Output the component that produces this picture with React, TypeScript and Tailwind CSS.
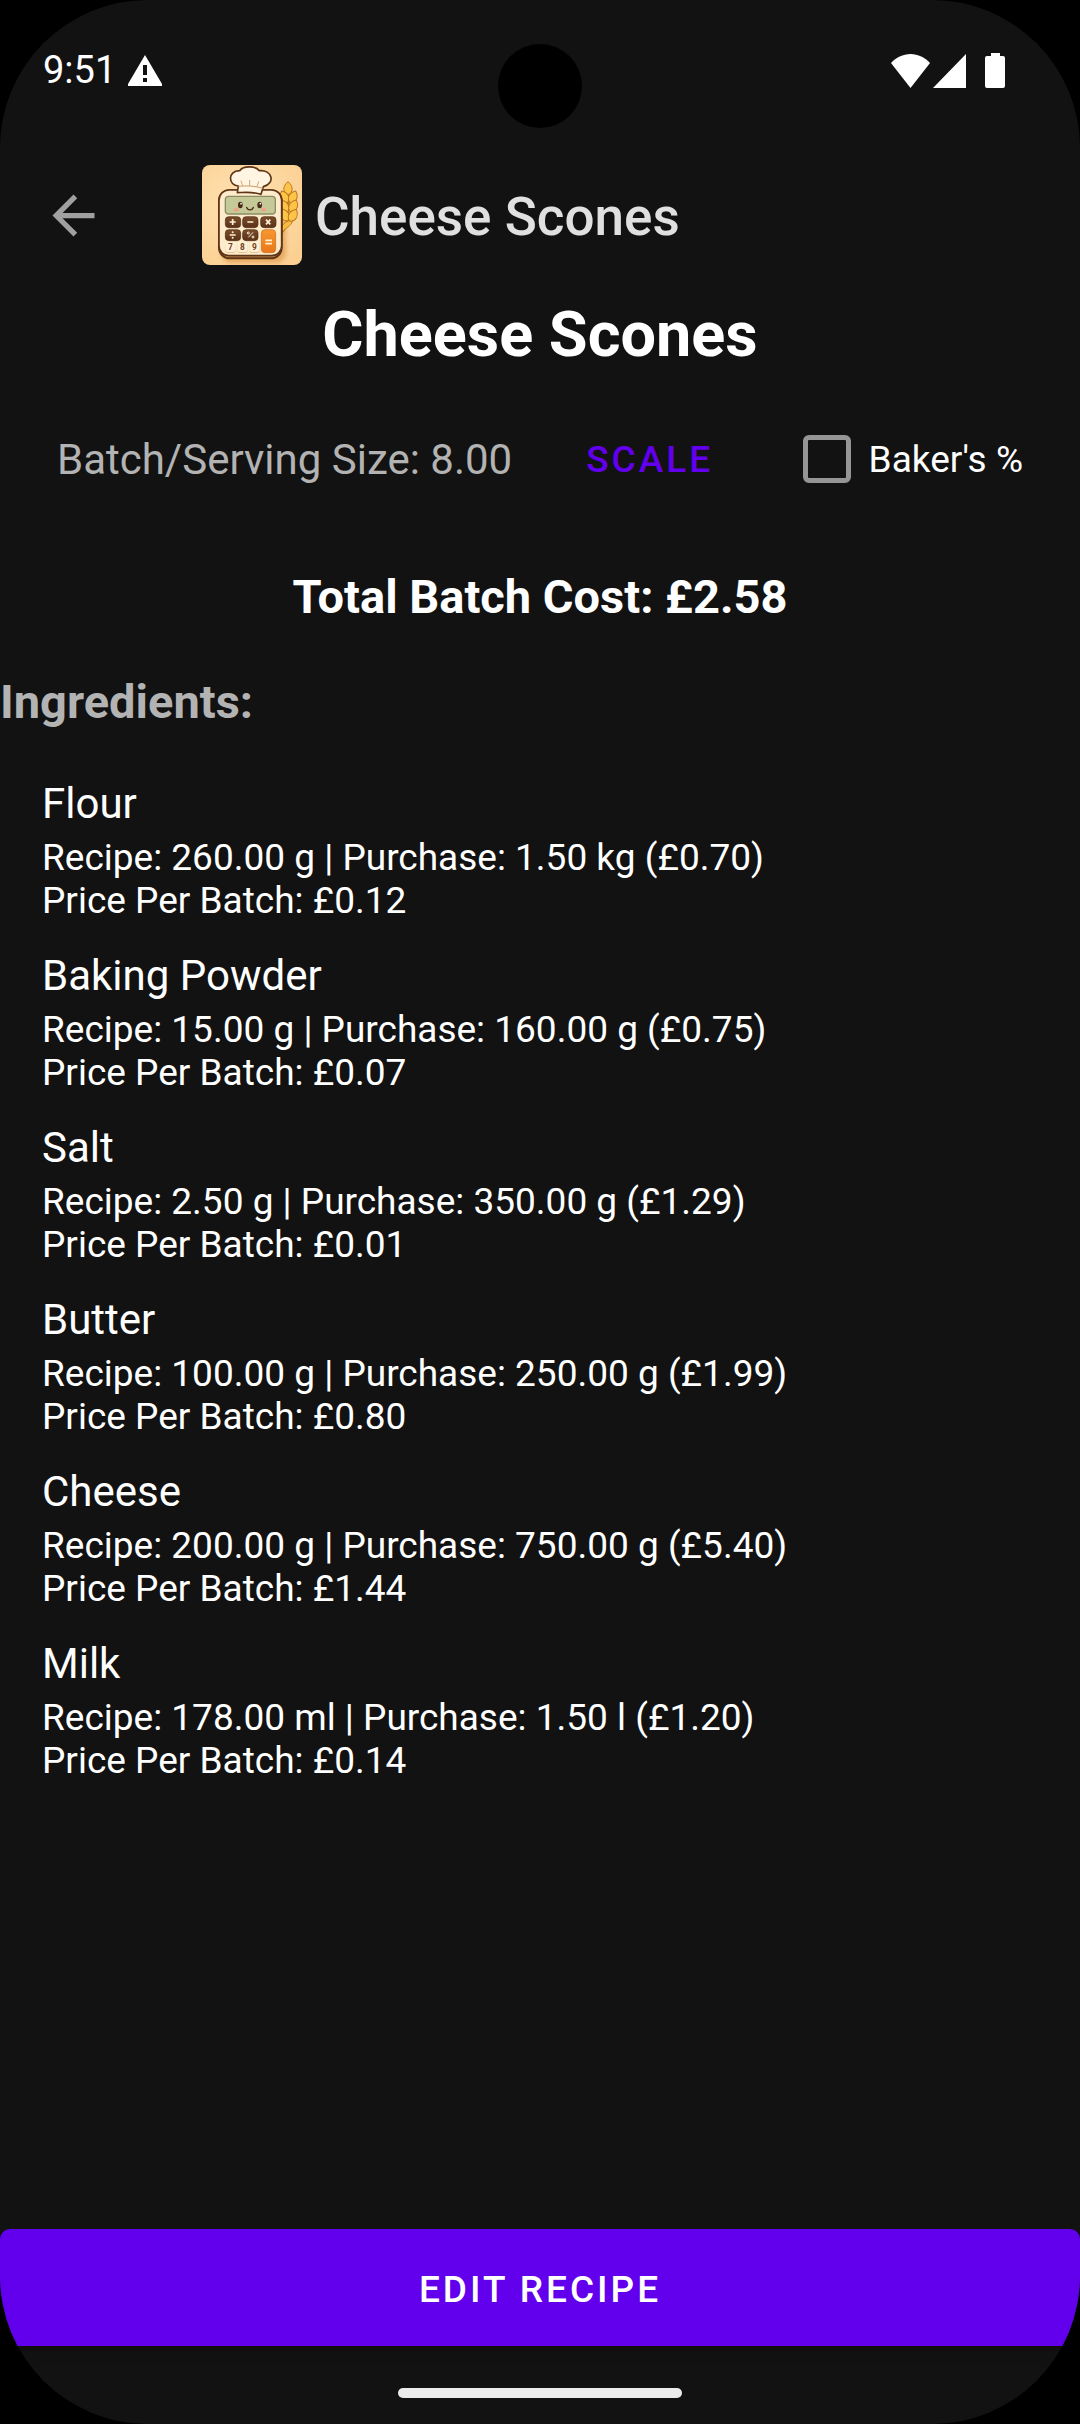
import { useState } from "react";

type Ingredient = {
  name: string;
  recipe: string;
  purchase: string;
  price: string;
  perBatch: string;
};

const ingredients: Ingredient[] = [
  { name: "Flour", recipe: "260.00 g", purchase: "1.50 kg", price: "£0.70", perBatch: "£0.12" },
  { name: "Baking Powder", recipe: "15.00 g", purchase: "160.00 g", price: "£0.75", perBatch: "£0.07" },
  { name: "Salt", recipe: "2.50 g", purchase: "350.00 g", price: "£1.29", perBatch: "£0.01" },
  { name: "Butter", recipe: "100.00 g", purchase: "250.00 g", price: "£1.99", perBatch: "£0.80" },
  { name: "Cheese", recipe: "200.00 g", purchase: "750.00 g", price: "£5.40", perBatch: "£1.44" },
  { name: "Milk", recipe: "178.00 ml", purchase: "1.50 l", price: "£1.20", perBatch: "£0.14" },
];

// cx, cy, rotation of each wheat grain
const grains = [
  [258, 70, 0],
  [247, 96, -24],
  [273, 96, 24],
  [247, 124, -24],
  [274, 123, 26],
  [248, 150, -24],
  [273, 151, 30],
];

const darkKeys = [
  { x: 70, y: 155 },
  { x: 122, y: 155 },
  { x: 176, y: 155 },
  { x: 70, y: 194 },
  { x: 122, y: 194 },
];

function AppLogo() {
  return (
    <svg viewBox="0 0 300 300" className="size-[100px] shrink-0 rounded-lg" aria-hidden="true">
      <defs>
        <radialGradient id="logoBg" cx="0.4" cy="0.4" r="0.75">
          <stop offset="0" stopColor="#ffe3b4" />
          <stop offset="1" stopColor="#fbcf92" />
        </radialGradient>
        <linearGradient id="logoKey" x1="0" y1="0" x2="0" y2="1">
          <stop offset="0" stopColor="#7a4c2a" />
          <stop offset="1" stopColor="#5a3218" />
        </linearGradient>
        <linearGradient id="logoEquals" x1="0" y1="0" x2="0" y2="1">
          <stop offset="0" stopColor="#f7972f" />
          <stop offset="1" stopColor="#e9781a" />
        </linearGradient>
        <filter id="logoShadow" x="-20%" y="-20%" width="140%" height="140%">
          <feGaussianBlur stdDeviation="7" />
        </filter>
      </defs>
      <rect width="300" height="300" fill="url(#logoBg)" />
      <rect x="58" y="90" width="194" height="204" rx="32" fill="#d8923f" opacity="0.6" filter="url(#logoShadow)" />

      <path d="M238 204c18-16 22-44 21-124" fill="none" stroke="#c98218" strokeWidth="7" />
      <path d="M238 202c-4-22 14-36 34-37-2 15-14 20-22 27-4 4-8 6-12 10z" fill="#f8bd40" stroke="#c07a1c" strokeWidth="3" />
      {grains.map(([cx, cy, angle]) => (
        <path
          key={`${cx}-${cy}`}
          d="M0-20C18-6 15 13 0 20C-15 13-18-6 0-20z"
          fill="#fcc54a"
          stroke="#c07a1c"
          strokeWidth="3"
          transform={`translate(${cx} ${cy}) rotate(${angle})`}
        />
      ))}

      <rect x="51" y="76" width="188" height="204" rx="32" fill="#c98f52" stroke="#5f3517" strokeWidth="6" />
      <rect x="51" y="75" width="188" height="197" rx="30" fill="#fdebcb" stroke="#5f3517" strokeWidth="5" />
      <rect x="70" y="94" width="150" height="53" rx="10" fill="#c5c998" stroke="#8b8c63" strokeWidth="4" />
      <ellipse cx="115" cy="120" rx="7" ry="10" fill="#4a2816" />
      <ellipse cx="173" cy="120" rx="7" ry="10" fill="#4a2816" />
      <circle cx="117" cy="116" r="2.5" fill="#fff" />
      <circle cx="175" cy="116" r="2.5" fill="#fff" />
      <ellipse cx="103" cy="134" rx="8" ry="5" fill="#f0a184" />
      <ellipse cx="185" cy="134" rx="8" ry="5" fill="#f0a184" />
      <path d="M134 127c3 10 17 10 20 0" fill="none" stroke="#4a2816" strokeWidth="4" strokeLinecap="round" />

      <path
        d="M106 83l3-20c-30-1-34-45 4-46C124 2 160 2 172 17c38-4 50 38 12 48l-7 23c-24-9-46-6-71-5z"
        fill="#fff5e2"
        stroke="#5f3517"
        strokeWidth="5"
        strokeLinejoin="round"
      />
      <path d="M109 64c26-3 50-1 74 6" fill="none" stroke="#c99a6b" strokeWidth="3" />
      <path d="M122 62l-5-14M143 62v-16M165 64l5-14" stroke="#d5a679" strokeWidth="3" strokeLinecap="round" />

      {darkKeys.map(({ x, y }) => (
        <rect key={`${x}-${y}`} x={x} y={y} width="46" height="33" rx="10" fill="url(#logoKey)" stroke="#4d2b14" strokeWidth="2" />
      ))}
      <g stroke="#fff0d8" strokeWidth="5" fill="none">
        <path d="M83 171h18M92 162v18M136 171h18M192 164l13 14M205 164l-13 14M83 210h18" />
        <path d="M139 217l14-15" strokeWidth="3" />
        <circle cx="139" cy="204" r="3" strokeWidth="3" />
        <circle cx="153" cy="216" r="3" strokeWidth="3" />
      </g>
      <circle cx="92" cy="202" r="3" fill="#fff0d8" />
      <circle cx="92" cy="218" r="3" fill="#fff0d8" />
      <rect x="178" y="194" width="43" height="69" rx="11" fill="url(#logoEquals)" stroke="#c8691b" strokeWidth="2" />
      <path d="M190 226h20M190 236h20" stroke="#ffedd0" strokeWidth="5" />

      {["7", "8", "9"].map((digit, index) => (
        <g key={digit}>
          <rect x={70 + index * 36} y="233" width="31" height="31" rx="9" fill="#e7c290" />
          <rect x={70 + index * 36} y="231" width="31" height="30" rx="9" fill="#fff0d6" />
          <text
            x={85 + index * 36}
            y="255"
            textAnchor="middle"
            fontFamily="Roboto, sans-serif"
            fontSize="25"
            fontWeight="700"
            fill="#6b3f1f"
          >
            {digit}
          </text>
        </g>
      ))}
    </svg>
  );
}

function StatusBar() {
  return (
    <div className="relative flex items-center justify-between pt-12 pr-[75px] pl-[43px]">
      <div className="flex items-center gap-3">
        <span className="text-[38px] leading-[45px]">9:51</span>
        <svg viewBox="0 0 34 31" className="h-[31px] w-[34px]" fill="#fff" aria-label="Warning">
          <path d="M17 0 34 29v2H0v-2zM15 10v10h4V10zM15 23v4h4v-4z" fillRule="evenodd" />
        </svg>
      </div>
      <div className="flex items-center">
        <svg viewBox="0 0 39 34" className="h-[34px] w-[39px]" fill="#fff" aria-label="Wi-Fi">
          <path d="M19.5 34 0 9C5 3.500 12 0 19.500 0S34 3.500 39 9z" />
        </svg>
        <svg viewBox="0 0 33 34" className="ml-[3px] h-[34px] w-[33px]" fill="#fff" aria-label="Signal">
          <path d="M33 0v34H0z" />
        </svg>
        <svg viewBox="0 0 20 35" className="ml-[19px] h-[35px] w-5" fill="#fff" aria-label="Battery">
          <path d="M6 0h9v3h3a2 2 0 0 1 2 2v28a2 2 0 0 1-2 2H2a2 2 0 0 1-2-2V5a2 2 0 0 1 2-2h4z" />
        </svg>
      </div>
      {/* camera cutout */}
      <div className="absolute top-11 left-1/2 size-[84px] -translate-x-1/2 rounded-full bg-black" />
    </div>
  );
}

function IngredientRow({ ingredient }: { ingredient: Ingredient }) {
  const { name, recipe, purchase, price, perBatch } = ingredient;

  return (
    <li>
      <h3 className="mb-2 text-[42px] leading-[49px]">{name}</h3>
      <p className="text-[37px] leading-[43px]">
        {`Recipe: ${recipe} | Purchase: ${purchase} (${price})`}
      </p>
      <p className="text-[37px] leading-[43px]">{`Price Per Batch: ${perBatch}`}</p>
    </li>
  );
}

export default function App() {
  const [bakersPercent, setBakersPercent] = useState(false);

  return (
    <div className="min-h-screen bg-black font-[Roboto,sans-serif] text-white">
      <div className="flex min-h-screen flex-col overflow-hidden rounded-[148px] bg-[#121212]">
        <StatusBar />

        <header className="mt-12 flex h-[148px] items-center pl-[42px]">
          <button type="button" aria-label="Back" className="mr-[97px]">
            <svg viewBox="0 0 24 24" className="size-[63px]" fill="#a0a0a0">
              <path d="M20 11H7.830l5.590-5.590L12 4l-8 8 8 8 1.410-1.410L7.830 13H20z" />
            </svg>
          </button>
          <AppLogo />
          <span className="pt-1 pl-[13px] text-[53px] leading-[62px] font-medium text-[#e0e0e0]">Cheese Scones</span>
        </header>

        <main className="flex flex-1 flex-col">
          <h1 className="mt-[9px] text-center text-[63px] leading-[74px] font-bold">Cheese Scones</h1>

          <div className="mt-6 flex h-[126px] items-center px-[57px]">
            <span className="text-[42px] leading-[49px] text-[#b3b3b3]">Batch/Serving Size: 8.00</span>
            <button type="button" className="ml-[74px] text-[37px] leading-[43px] font-medium tracking-[3px] text-[#6200ee]">
              SCALE
            </button>
            <label className="ml-auto flex items-center gap-[18px] text-[37px] leading-[43px]">
              <input
                type="checkbox"
                checked={bakersPercent}
                onChange={(event) => setBakersPercent(event.target.checked)}
                className="size-12 appearance-none rounded-md border-[5px] border-[#959595] checked:bg-[#6200ee]"
              />
              Baker's %
            </label>
          </div>

          <p className="mt-[47px] text-center text-[47px] leading-[55px] font-bold">Total Batch Cost: £2.58</p>

          <h2 className="mt-[50px] text-[47px] leading-[55px] font-bold text-[#b3b3b3]">Ingredients:</h2>
          <ul className="mt-[50px] flex flex-col gap-[29px] px-[42px]">
            {ingredients.map((ingredient) => (
              <IngredientRow key={ingredient.name} ingredient={ingredient} />
            ))}
          </ul>
        </main>

        <button
          type="button"
          className="h-[117px] w-full rounded-t-[10px] bg-[#6200ee] pt-1 text-[37px] leading-[43px] font-medium tracking-[3px] shadow-lg"
        >
          EDIT RECIPE
        </button>
        <div className="flex justify-center pt-[42px] pb-[26px]">
          <div className="h-[10px] w-[284px] rounded-full bg-[#ececec]" />
        </div>
      </div>
    </div>
  );
}
